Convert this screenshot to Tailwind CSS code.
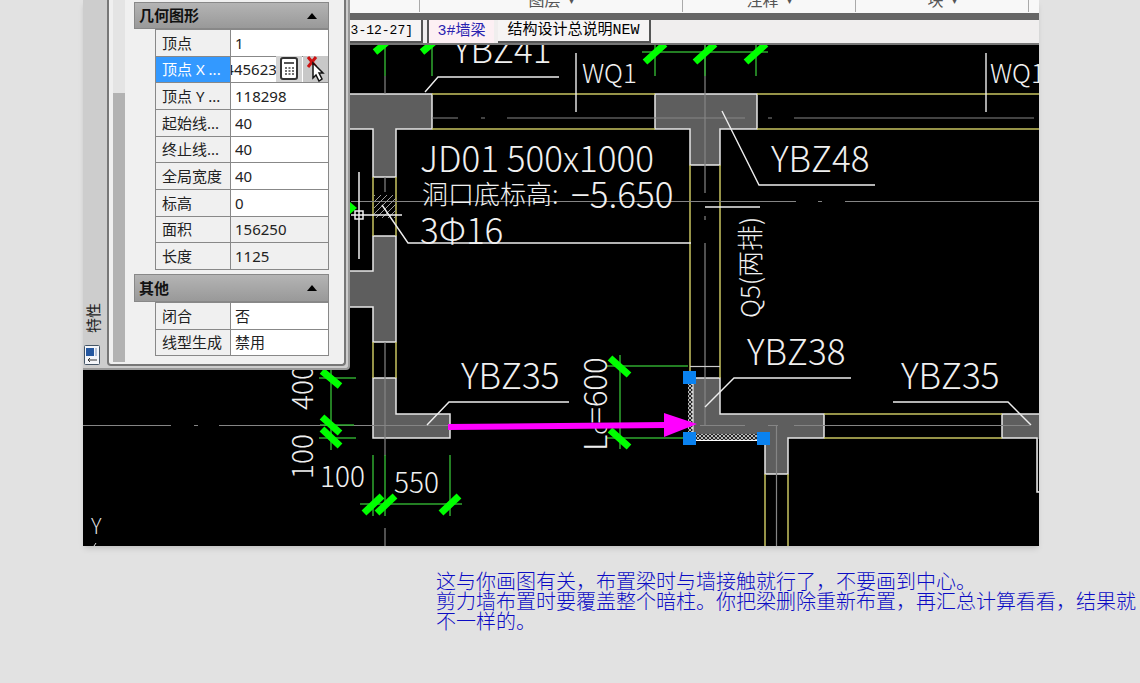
<!DOCTYPE html>
<html lang="zh-CN">
<head>
<meta charset="utf-8">
<title>特性</title>
<script src="https://cdn.jsdelivr.net/npm/@tailwindcss/browser@4"></script>
</head>
<body class="min-h-screen bg-[#e2e2e2] font-['Noto_Sans','Noto_Sans_CJK_SC',sans-serif]">
<main>
  <section class="relative ml-[83px] mr-[101px] overflow-hidden shadow-md bg-[#f8f8f8]">
    <div class="flex h-3 justify-end overflow-hidden bg-[#f8f8f8] text-base leading-4 text-[#555]">
      <div class="flex w-[263px] items-end justify-center gap-2 border-l border-[#aaa] pb-1">图层 <span class="text-[10px]">▾</span></div>
      <div class="flex w-[173px] items-end justify-center gap-2 border-l border-[#aaa] pb-1">注释 <span class="text-[10px]">▾</span></div>
      <div class="flex w-[174px] items-end justify-center gap-2 border-x border-[#aaa] pb-1">块 <span class="text-[10px]">▾</span></div>
      <div class="w-2.5"></div>
    </div>
    <div class="mt-px h-[7px] bg-[#666]"></div>
    <nav class="flex h-[25px] border-b-2 border-[#777] bg-[#f0eeee] pl-[260px] font-['Liberation_Mono','Noto_Sans_CJK_SC',monospace] text-[15px] leading-[21px] text-black">
      <button class="w-20 border-r-2 border-b-2 border-[#555] bg-[#f6f4f4] pr-2 text-right text-[13px]">3-12-27]</button>
      <button class="ml-1 w-[67px] border-l-2 border-[#555] bg-[#fdf0f4] text-[#2a22b0]">3#墙梁</button>
      <button class="ml-1 w-[153px] border-r-2 border-b-2 border-[#555] bg-[#f6f4f4]">结构设计总说明NEW</button>
    </nav>

    <svg class="block w-full bg-black" viewBox="83 45 956 501" fill="none" font-family="'Noto Sans CJK SC', sans-serif" font-weight="300">
      <defs>
        <pattern id="hatch" width="6" height="6" patternUnits="userSpaceOnUse"><path d="M0 6L6 0M-1 1L1 -1M5 7L7 5" stroke="#999"/></pattern>
        <pattern id="cross" width="4" height="4" patternUnits="userSpaceOnUse"><path d="M0 0L4 4M0 4L4 0" stroke="#ddd" stroke-width=".8"/></pattern>
      </defs>
      <!-- concrete walls -->
      <g fill="#5e5e5e" stroke="#e8e8e8" stroke-width="1.5">
        <path d="M340 94H432V129H396V177H373V129H340Z"/>
        <path d="M655 94H757V129H720V165H690V129H655Z"/>
        <path d="M373 236H396V342H373V307H340V271H373Z"/>
        <path d="M373 378H396V414H450V438H373Z"/>
        <path d="M692 378H720V414H824V438H788V474H765V438H692Z"/>
        <path d="M1045 414H1002V438H1037V492H1045"/>
      </g>
      <path d="M1038 439H1045V491H1038Z" fill="#000"/>
      <!-- beams -->
      <g stroke="#c8c460" stroke-width="1.5">
        <path d="M432 94H655M432 129H655M757 94H1039M757 129H1039M690 165V378M720 165V378M373 177V236M396 177V236M373 342V378M396 342V378M824 414H1002M824 438H1002M765 474V546M788 474V546"/>
      </g>
      <!-- axes -->
      <g stroke="#858585" stroke-width="1.2">
        <path d="M83 425.500H171M194 425.500H198M219 425.500H450M700 425.500H745M768 425.500H778M794 425.500H1030M351 201.500H796M818 201.500H822M845 201.500H1039M432 118H458M481 118H485M507 118H745M768 118H772M794 118H1034M705 45V193M705 216V220M705 243V425M776.500 425V546M385 76V94M385 342V456M385 528V546M385 177V192"/>
        <path d="M690 366.500H720" stroke="#ccc"/>
      </g>
      <rect x="374" y="195" width="22" height="23" fill="url(#hatch)"/>
      <!-- leaders -->
      <g stroke="#eee" stroke-width="1.4">
        <path d="M425 92L438 77H559M576 53V112M986 53V112M722 111L759 185H875M382 205L408 243H691M705 407L734 378H851M427 425L449 402H569M893 402H1008L1031 425M705 207H760"/>
      </g>
      <!-- dimensions -->
      <g stroke="#2fa82f" stroke-width="1.5">
        <path d="M385 45V76M432 45V76M642 52H768M655 45V76M705 45V76M756 45V76M331 365V450M319 378H356M320 425H354M319 438H356M373 455V516M385 455V516M450 455V516M360 504H462M620 355V449M607 366H688M607 438H688"/>
      </g>
      <g stroke="#0f0" stroke-width="7">
        <path d="M375 52L387 42M422 52L434 42M645 62L665 44M695 62L715 44M746 62L766 44M322 371L340 386M322 417L340 433M322 429L340 446M364 513L382 496M377 513L395 496M441 513L459 496M610 358L629 375M610 430L629 447"/>
      </g>
      <path d="M350 202L357 208L350 214Z" fill="#0f0"/>
      <!-- labels -->
      <g fill="#f0f0f0" font-size="35">
        <text x="453" y="63">YBZ41</text>
        <text x="771" y="172">YBZ48</text>
        <text x="747" y="365">YBZ38</text>
        <text x="461" y="389">YBZ35</text>
        <text x="901" y="389">YBZ35</text>
        <text x="420" y="172">JD01 500x1000</text>
        <text x="422" y="204" font-size="26">洞口底标高:</text>
        <text x="571" y="208">−5.650</text>
        <text x="420" y="244">3Φ16</text>
      </g>
      <g fill="#f0f0f0" font-size="28">
        <text x="582" y="83" font-size="26">WQ1</text>
        <text x="990" y="83" font-size="26">WQ1</text>
        <text x="320" y="487">100</text>
        <text x="394" y="493">550</text>
        <text transform="translate(313 410) rotate(-90)">400</text>
        <text transform="translate(313 479) rotate(-90)">100</text>
        <text transform="translate(607 451) rotate(-90)" font-size="31">L<tspan font-size="22">c</tspan>=600</text>
        <text transform="translate(760 318) rotate(-90)" font-size="26">Q5(两排)</text>
      </g>
      <text x="91" y="534" font-size="21" fill="#ddd">Y</text>
      <path d="M94 546L96 543" stroke="#ddd"/>
      <!-- crosshair -->
      <path d="M351 215H402M359 172V259M355 211H363V219H355Z" stroke="#eee" stroke-width="1.5"/>
      <!-- selected outline and grips -->
      <path d="M688 378H693V434H763V440H688Z" fill="#222"/>
      <rect x="688" y="378" width="5" height="60" fill="url(#cross)"/>
      <rect x="690" y="434" width="73" height="6" fill="url(#cross)"/>
      <path d="M693 384V434M690 440.500H763" stroke="#fff"/>
      <path d="M448 427L666 425" stroke="#f0f" stroke-width="6"/>
      <path d="M664 413L697 424L664 437Z" fill="#f0f"/>
      <path d="M683 371H696V384H683ZM683 432H696V445H683ZM757 432H770V445H757Z" fill="#0a82f0"/>
    </svg>

    <!-- properties palette -->
    <aside class="absolute top-0 left-0 flex w-[267px] rounded-br border-r-2 border-b-2 border-[#999] bg-[#cdcdcd] pr-0.5 pb-0.5">
      <div class="flex w-[25px] flex-col items-start justify-end gap-3 pb-px">
        <h1 class="rotate-180 text-[15px] leading-5 text-[#222] [writing-mode:vertical-rl]"><span class="[text-orientation:sideways]">特性</span></h1>
        <button aria-label="特性选项" class="ml-px"><svg class="block h-5 w-4" viewBox="0 0 16 20"><rect x=".5" y=".5" width="15" height="19" rx="1" fill="#f4f6fa" stroke="#456"/><rect x="2" y="3" width="8" height="8" fill="#2457a0"/><path d="M12 3V11" stroke="#7890b8"/><path d="M4 15H13M4 15L6 13M4 15L6 17" stroke="#333" fill="none"/></svg></button>
      </div>
      <div class="flex flex-1 rounded-b border-x-2 border-b-2 border-[#777] bg-[#f0f0f0] pl-1">
        <div class="mr-[9px] mb-0.5 w-3 bg-[#b2b2b2]"><div class="h-[93px] bg-[#e4e4e4]"></div></div>
        <div class="mr-[15px] flex-1 pt-0.5 pb-2">
          <h2><button class="flex h-[27px] w-full items-center justify-between border border-[#888] bg-linear-to-b from-[#b4b4b4] to-[#999] pr-2.5 pl-1 text-[15px] font-bold text-[#111]">几何图形<svg class="h-1.5 w-3" viewBox="0 0 12 6"><path d="M1 6L6 0L11 6Z"/></svg></button></h2>
          <table class="ml-[21px] h-[241px] w-[174px] table-fixed border-collapse text-[15px] leading-5 text-[#222] [&_input]:block [&_input]:w-full [&_td]:border [&_td]:border-[#888] [&_td]:bg-white [&_td]:p-0 [&_td]:pl-1 [&_th]:border [&_th]:border-[#888] [&_th]:p-0 [&_th]:pl-1.5 [&_th]:text-left [&_th]:font-normal">
            <tr><th class="w-[75px]"><label for="a">顶点</label></th><td><input id="a" value="1"></td></tr>
            <tr><th class="bg-[#3399ff] text-white"><label for="b">顶点 X ...</label></th><td><div class="-ml-1 flex h-5"><div class="flex w-[46px] justify-end overflow-hidden"><input id="b" value="445623" class="-mr-1.5 min-w-[57px]"></div><button aria-label="计算器" class="-my-[3px] w-[26px] bg-[#d4d4d4]"><svg class="mx-auto block" width="18" height="24" viewBox="0 0 18 24"><rect x="1" y="1" width="16" height="21" rx="2" fill="#fff" stroke="#333" stroke-width="2"/><path d="M4 6H14" stroke="#555" stroke-width="2"/><path d="M5 11H14M5 14H14M5 17H14" stroke="#444" stroke-width="1.500" stroke-dasharray="2 1.500"/></svg></button><button aria-label="拾取点" class="-my-[3px] ml-px w-[25px] bg-[#c8c8c8]"><svg class="block" width="25" height="26" viewBox="0 0 25 26"><path d="M5 1L13 11M13 1L5 11" stroke="#c11" stroke-width="3"/><path d="M10 7V22L13 19L16 25L19 23L16 17H20Z" fill="#fff" stroke="#111" stroke-width="1.500"/></svg></button></div></td></tr>
            <tr><th><label for="c">顶点 Y ...</label></th><td><input id="c" value="118298"></td></tr>
            <tr><th><label for="d">起始线...</label></th><td><input id="d" value="40"></td></tr>
            <tr><th><label for="e">终止线...</label></th><td><input id="e" value="40"></td></tr>
            <tr><th><label for="f">全局宽度</label></th><td><input id="f" value="40"></td></tr>
            <tr><th><label for="g">标高</label></th><td><input id="g" value="0"></td></tr>
            <tr><th><label for="h">面积</label></th><td class="bg-[#f0f0f0]!"><input id="h" value="156250" readonly></td></tr>
            <tr><th><label for="i">长度</label></th><td class="bg-[#f0f0f0]!"><input id="i" value="1125" readonly></td></tr>
          </table>
          <h2 class="mt-1"><button class="flex h-7 w-full items-center justify-between border border-[#888] bg-linear-to-b from-[#b4b4b4] to-[#999] pr-2.5 pl-1 text-[15px] font-bold text-[#111]">其他<svg class="h-1.5 w-3" viewBox="0 0 12 6"><path d="M1 6L6 0L11 6Z"/></svg></button></h2>
          <table class="ml-[21px] h-[54px] w-[174px] table-fixed border-collapse text-[15px] leading-5 text-[#222] [&_input]:block [&_input]:w-full [&_td]:border [&_td]:border-[#888] [&_td]:bg-white [&_td]:p-0 [&_td]:pl-1 [&_th]:border [&_th]:border-[#888] [&_th]:p-0 [&_th]:pl-1.5 [&_th]:text-left [&_th]:font-normal">
            <tr><th class="w-[75px]"><label for="j">闭合</label></th><td><input id="j" value="否"></td></tr>
            <tr><th><label for="k">线型生成</label></th><td><input id="k" value="禁用"></td></tr>
          </table>
        </div>
      </div>
    </aside>
  </section>

  <p class="mt-[25px] ml-[436px] font-['Noto_Sans_CJK_SC',sans-serif] text-xl leading-5 font-light text-[#0c0cc4]">这与你画图有关，布置梁时与墙接触就行了，不要画到中心。<br>剪力墙布置时要覆盖整个暗柱。你把梁删除重新布置，再汇总计算看看，结果就不一样的。</p>
</main>
</body>
</html>
